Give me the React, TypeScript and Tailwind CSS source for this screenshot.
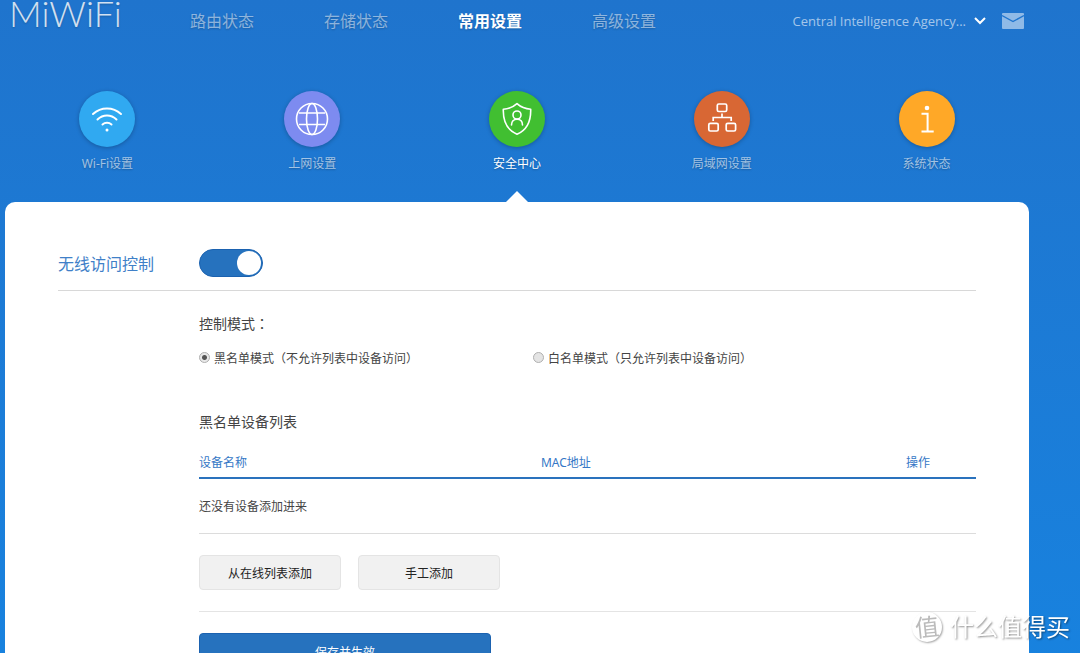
import { useState } from "react";

const navItems = ["路由状态", "存储状态", "常用设置", "高级设置"];

function WifiIcon() {
  return (
    <svg width="56" height="56" viewBox="0 0 56 56" fill="none" stroke="white" strokeWidth="2" strokeLinecap="round">
      <path d="M14 23C22 15.5 34 15.5 42 23" />
      <path d="M18.5 28.5C24 23.2 32 23.2 37.5 28.5" />
      <path d="M23.5 33.5C26 31.2 30 31.2 32.5 33.5" />
      <circle cx="28" cy="39" r="1.5" fill="white" stroke="none" />
    </svg>
  );
}

function GlobeIcon() {
  return (
    <svg width="56" height="56" viewBox="0 0 56 56" fill="none" stroke="white" strokeWidth="1.6">
      <circle cx="28" cy="28" r="15.5" />
      <ellipse cx="28" cy="28" rx="5.5" ry="15.5" />
      <path d="M15 22H41M15 33.5H41" />
    </svg>
  );
}

function ShieldIcon() {
  return (
    <svg width="56" height="56" viewBox="0 0 56 56" fill="none" stroke="white" strokeWidth="1.6" strokeLinejoin="round">
      <path d="M28 12.7C24 16.4 19.5 18 14.3 18.2C14 29 16.5 38.5 28 43.3C39.5 38.5 42 29 41.7 18.2C36.5 18 32 16.4 28 12.7Z" />
      <circle cx="28" cy="24" r="4" />
      <path d="M22.5 34C22.5 30.6 24.6 28.2 28 28.2C31.4 28.2 33.5 30.6 33.5 34" strokeLinecap="round" />
    </svg>
  );
}

function LanIcon() {
  return (
    <svg width="56" height="56" viewBox="0 0 56 56" fill="none" stroke="white" strokeWidth="1.7">
      <rect x="23.3" y="13" width="9.4" height="7.5" rx="1.5" />
      <rect x="14.8" y="32.3" width="9.4" height="7.7" rx="1.5" />
      <rect x="32.2" y="32.3" width="9.4" height="7.7" rx="1.5" />
      <path d="M28 22.5V26.5M19.2 30V26.5H37.2V30" />
    </svg>
  );
}

function InfoIcon() {
  return (
    <svg width="56" height="56" viewBox="0 0 56 56" fill="none" stroke="white" strokeWidth="2">
      <circle cx="28" cy="17" r="2.3" fill="white" stroke="none" />
      <path d="M22.5 22.7H28.6V40.5M22.5 40.5H34.7" />
    </svg>
  );
}

const tabs = [
  { name: "Wi-Fi设置", color: "bg-[#30a9f1]", icon: <WifiIcon /> },
  { name: "上网设置", color: "bg-[#7d8bf0]", icon: <GlobeIcon /> },
  { name: "安全中心", color: "bg-[#41bf31]", icon: <ShieldIcon /> },
  { name: "局域网设置", color: "bg-[#d86734]", icon: <LanIcon /> },
  { name: "系统状态", color: "bg-[#ffa827]", icon: <InfoIcon /> },
];

const modes = [
  { id: "black", label: "黑名单模式（不允许列表中设备访问）" },
  { id: "white", label: "白名单模式（只允许列表中设备访问）" },
];

export default function App() {
  const [enabled, setEnabled] = useState(true);
  const [mode, setMode] = useState("black");
  const [active, setActive] = useState("安全中心");

  return (
    <div className="min-h-screen bg-linear-to-b from-[#1f74cd] to-[#1783e0] pl-[5px] pr-[51px] font-['Noto_Sans','Noto_Sans_CJK_SC',sans-serif] text-xs leading-5 text-[#444]">
      <header className="flex h-[42px] items-center text-white/50 [text-shadow:0_1px_2px_rgba(0,0,0,0.2)]">
        <a href="#" className="-mt-4 w-[185px] pl-1 font-['Lato',sans-serif] text-4xl leading-10 font-light text-white/80">
          MiWiFi
        </a>
        <nav className="flex gap-[70px] text-base">
          {navItems.map((item) => (
            <a key={item} href="#" className={item === "常用设置" ? "font-bold text-white" : ""}>
              {item}
            </a>
          ))}
        </nav>
        <div className="ml-auto flex items-center pr-[5px]">
          <button className="flex items-center gap-2 font-['Open_Sans',sans-serif] text-[13px] text-white/60">
            Central Intelligence Agency...
            <svg width="12" height="8" viewBox="0 0 12 8" fill="none" stroke="white" strokeWidth="2">
              <path d="M1 1L6 6L11 1" />
            </svg>
          </button>
          <button aria-label="消息" className="ml-4">
            <svg width="22" height="16" viewBox="0 0 22 16">
              <rect width="22" height="16" rx="1" fill="#8fbae7" />
              <path d="M0 2.5L11 8.5L22 2.5" fill="none" stroke="#1f75cf" strokeWidth="1.4" />
            </svg>
          </button>
        </div>
      </header>

      <nav className="flex pt-[49px] pb-7">
        {tabs.map((tab) => (
          <button
            key={tab.name}
            onClick={() => setActive(tab.name)}
            className="relative flex flex-1 flex-col items-center gap-[7px] [text-shadow:0_1px_2px_rgba(0,0,0,0.25)]"
          >
            <span className={`size-14 rounded-full shadow-[0_1px_4px_rgba(0,0,0,0.25)] ${tab.color}`}>{tab.icon}</span>
            <span className={active === tab.name ? "text-white" : "text-white/60"}>{tab.name}</span>
            {active === tab.name && (
              <svg className="absolute top-full mt-[17px]" width="22" height="11" viewBox="0 0 22 11">
                <path d="M0 11L11 0L22 11Z" fill="white" />
              </svg>
            )}
          </button>
        ))}
      </nav>

      <main className="rounded-t-[10px] bg-white px-[53px] pt-[47px] pb-10">
        <div className="flex items-center border-b border-[#d8d8d8] pb-[13px]">
          <h2 id="access" className="w-[141px] pt-0.5 text-base leading-5 text-[#4080c8]">
            无线访问控制
          </h2>
          <button
            role="switch"
            aria-checked={enabled}
            aria-labelledby="access"
            onClick={() => setEnabled(!enabled)}
            className={`flex h-7 w-16 items-center rounded-full border border-[#1b62b0] px-px ${
              enabled ? "justify-end bg-[#2672be]" : "justify-start bg-gray-300"
            }`}
          >
            <span className="size-6 rounded-full bg-white" />
          </button>
        </div>

        <div className="pl-[141px]">
          <fieldset className="pt-[22px]">
            <legend className="float-left w-full font-['Noto_Sans_CJK_TC',sans-serif] text-sm leading-5">控制模式：</legend>
            <div className="clear-both flex pt-4">
              {modes.map((m) => (
                <label key={m.id} className="flex w-[43%] items-start gap-1 whitespace-nowrap">
                  <input
                    type="radio"
                    name="mode"
                    checked={mode === m.id}
                    onChange={() => setMode(m.id)}
                    className="mt-[3px] size-[11px] appearance-none rounded-full border border-[#b0b0b0] bg-[#e4e4e4] checked:bg-[radial-gradient(circle,#555_2px,#e8e8e8_3px)]"
                  />
                  {m.label}
                </label>
              ))}
            </div>
          </fieldset>

          <h3 className="mt-[43px] text-sm leading-5">黑名单设备列表</h3>
          <table className="mt-[21px] w-full table-fixed text-left">
            <thead>
              <tr className="border-b-2 border-[#2a72bd] text-[#3578c6]">
                <th className="w-[44%] pb-1 font-normal">设备名称</th>
                <th className="pb-1 font-normal">MAC地址</th>
                <th className="w-[9%] pb-1 font-normal">操作</th>
              </tr>
            </thead>
            <tbody>
              <tr className="border-b border-[#dcdcdc]">
                <td colSpan={3} className="pt-[18px] pb-4">
                  还没有设备添加进来
                </td>
              </tr>
            </tbody>
          </table>

          <div className="flex gap-[17px] border-b border-[#e4e4e4] py-[21px] text-[#222]">
            <button className="h-[35px] w-[142px] rounded-sm border border-[#e4e4e4] bg-[#f1f1f1] pt-0.5">
              从在线列表添加
            </button>
            <button className="h-[35px] w-[142px] rounded-sm border border-[#e4e4e4] bg-[#f1f1f1] pt-0.5">
              手工添加
            </button>
          </div>

          <button className="mt-[21px] h-10 w-[292px] rounded-sm border border-[#1b62b0] bg-[#2672be] text-white">
            保存并生效
          </button>
        </div>
      </main>

      <div className="fixed right-2.5 bottom-2.5 flex items-center gap-2 text-2xl leading-8 text-white [text-shadow:1px_1px_2px_rgba(0,0,0,0.45)]">
        <span className="flex size-[30px] items-center justify-center rounded-full bg-white text-[#bbb] shadow-[1px_1px_2px_rgba(0,0,0,0.35)] [text-shadow:none]">
          <span className="-rotate-6">值</span>
        </span>
        什么值得买
      </div>
    </div>
  );
}
